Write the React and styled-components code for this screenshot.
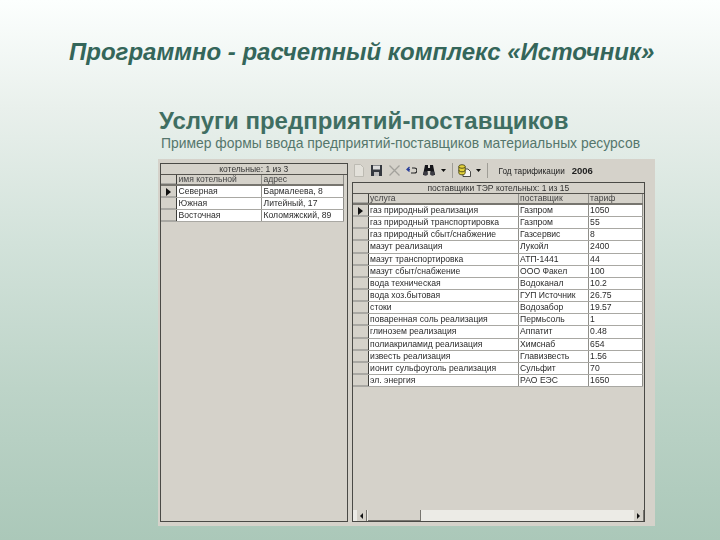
import React from 'react';
import styled, { createGlobalStyle } from 'styled-components';

const Global = createGlobalStyle`
  html, body { margin: 0; padding: 0; }
  body { width: 720px; height: 540px; overflow: hidden; font-family: "Liberation Sans", Arial, sans-serif; }
`;
const Page = styled.div`
  width: 720px; height: 540px; box-sizing: border-box; display: flex; flex-direction: column;
  background: linear-gradient(180deg, #fcfffe 0%, #e9f0ec 20%, #d2e2da 45%, #bdd4c8 72%, #abc8b9 100%);
  padding-top: 39px;
`;
const Title = styled.h1`
  margin: 0 0 0 69px; font-size: 24px; line-height: 26px; font-weight: bold; font-style: italic; color: #34665a; white-space: nowrap;
`;
const Subtitle = styled.h2`
  margin: 43px 0 0 159px; font-size: 24px; line-height: 26px; font-weight: bold; color: #3f6e62; white-space: nowrap;
`;
const Caption = styled.p`
  margin: 2px 0 0 161px; font-size: 13.9px; line-height: 15px; color: #55766c; white-space: nowrap;
`;
const Window = styled.div`
  margin: 8px 0 0 158px; width: 497px; height: 367px; box-sizing: border-box; background: #d5d2ca;
  display: flex; gap: 4px; padding: 4px 10px 4px 2px; filter: blur(0.4px);
`;
const LeftPane = styled.section`
  width: 188px; box-sizing: border-box; border: 1px solid #4a4a46;
`;
const RightPane = styled.section`
  width: 294px; display: flex; flex-direction: column; margin-top: -4px;
`;
const Toolbar = styled.div`
  height: 23px; display: flex; align-items: center; gap: 5px; box-sizing: border-box; padding-left: 1px; font-size: 8.2px; color: #222;
`;
const Sep = styled.span`
  width: 1px; height: 15px; background: #9f9d96; margin: 0 0 0 1px;
`;
const Year = styled.span`
  margin-left: 6px; white-space: nowrap;
`;
const YearValue = styled.b`
  margin-left: 7px; font-size: 9.5px;
`;
const GridFrame = styled.div`
  flex: 1; border: 1px solid #4a4a46; box-sizing: border-box; display: flex; flex-direction: column; position: relative;
`;
const GridTitle = styled.div`
  height: 10px; line-height: 10px; text-align: center; font-size: 8.5px; color: #333; border-bottom: 1px solid #55534e; white-space: nowrap;
`;
const Row = styled.div`
  display: grid; grid-template-columns: ${p => p.$cols}; height: ${p => p.$h}px; box-sizing: border-box;
  width: ${p => p.$w}px; background: ${p => p.$head ? '#d5d2ca' : '#fff'};
  border-bottom: ${p => p.$head ? '2px solid #77756f' : '1px solid #a9a8a3'};
`;
const Indicator = styled.div`
  background: #d5d2ca; border-right: 1px solid #3e3e3a; box-shadow: inset 0 -1px 0 #a9a8a3; display: flex; align-items: center; justify-content: center;
`;
const Arrow = styled.span`
  width: 0; height: 0; border-left: 5px solid #111; border-top: 4px solid transparent; border-bottom: 4px solid transparent;
`;
const Cell = styled.div`
  font-size: 8.6px; line-height: ${p => p.$head ? 9 : 11}px; color: ${p => p.$head ? '#444' : '#2b2b2b'}; padding-left: 1.5px; white-space: nowrap;
  border-right: 1px solid #8f8e89;
`;
const Scrollbar = styled.div`
  position: absolute; left: 0; right: 0; bottom: 0; height: 11px; display: flex; background: #ecebe6;
`;
const ScrollBtn = styled.div`
  width: 9px; margin-left: ${p => p.$ml || 0}px; background: #d5d2ca; border-right: 1px solid #77756f; display: flex; align-items: center; justify-content: center;
`;
const ScrollTri = styled.span`
  width: 0; height: 0; border-top: 3px solid transparent; border-bottom: 3px solid transparent;
  ${p => p.$dir === 'l' ? 'border-right: 3px solid #111;' : 'border-left: 3px solid #111;'}
`;
const Thumb = styled.div`
  width: 53px; margin-left: 1px; background: #d5d2ca; border-right: 1px solid #77756f; border-bottom: 1px solid #77756f; box-sizing: border-box;
`;
const Spacer = styled.div`flex: 1;`;

const leftRows = [['Северная', 'Бармалеева, 8'], ['Южная', 'Литейный, 17'], ['Восточная', 'Коломяжский, 89']];
const rightRows = [
  ['газ природный реализация', 'Газпром', '1050'],
  ['газ природный транспортировка', 'Газпром', '55'],
  ['газ природный сбыт/снабжение', 'Газсервис', '8'],
  ['мазут реализация', 'Лукойл', '2400'],
  ['мазут транспортировка', 'АТП-1441', '44'],
  ['мазут сбыт/снабжение', 'ООО Факел', '100'],
  ['вода техническая', 'Водоканал', '10.2'],
  ['вода хоз.бытовая', 'ГУП Источник', '26.75'],
  ['стоки', 'Водозабор', '19.57'],
  ['поваренная соль реализация', 'Пермьсоль', '1'],
  ['глинозем реализация', 'Аппатит', '0.48'],
  ['полиакриламид реализация', 'Химснаб', '654'],
  ['известь реализация', 'Главизвесть', '1.56'],
  ['ионит сульфоуголь реализация', 'Сульфит', '70'],
  ['эл. энергия', 'РАО ЕЭС', '1650'],
];

const Icons = {
  file: <svg width="12" height="13" viewBox="0 0 12 13"><path d="M1.500.500h6l3 3v9h-9z" fill="#e3e1da" stroke="#bdbbb3" /></svg>,
  save: <svg width="13" height="13" viewBox="0 0 13 13"><path d="M1 1h11v11H1z" fill="#34383f" /><path d="M3 1.500h7v4H3z" fill="#dcdcdc" /><path d="M4 8h5v4H4z" fill="#bdbdbd" /></svg>,
  del: <svg width="13" height="13" viewBox="0 0 13 13"><path d="M1.500 1.500l10 10M11.500 1.500l-10 10" stroke="#a3a29c" strokeWidth="1.300" /></svg>,
  undo: <svg width="11" height="9" viewBox="0 0 11 9"><path d="M3.500 1L1 3.500l2.500 2M1.500 3.500H4" fill="none" stroke="#2a3f9a" strokeWidth="1.300" /><path d="M6 2h2.500a2.500 2.500 0 0 1 0 5H5" fill="none" stroke="#222" strokeWidth="1.200" /></svg>,
  find: <svg width="14" height="13" viewBox="0 0 14 13"><path d="M3 1h3v3h2V1h3l2 10H8.500V7h-3v4H1z" fill="#15151a" /><circle cx="3.500" cy="9.500" r="2.200" fill="#3c3c44" /><circle cx="10.500" cy="9.500" r="2.200" fill="#3c3c44" /></svg>,
  down: <svg width="5" height="3" viewBox="0 0 5 3"><path d="M0 0h5L2.500 3z" fill="#111" /></svg>,
  db: <svg width="13" height="13" viewBox="0 0 13 13"><path d="M5 5h5l2.500 2.500v5H5z" fill="#f6f6f2" stroke="#222" strokeWidth="0.800" /><path d="M.8 2.500v6.500c0 1 1.400 1.800 3.200 1.800s3.200-.8 3.200-1.800V2.500" fill="#e4d23a" stroke="#3b3a10" strokeWidth="0.800" /><ellipse cx="4" cy="2.500" rx="3.200" ry="1.800" fill="#e4d23a" stroke="#3b3a10" strokeWidth="0.800" /><path d="M.8 6c0 1 1.400 1.800 3.200 1.800S7.200 7 7.200 6" fill="none" stroke="#3b3a10" strokeWidth="0.800" /></svg>,
};

function DataGrid({ title, cols, width, head, rows, rowH, headH }) {
  return (
    <>
      <GridTitle>{title}</GridTitle>
      <Row $cols={cols} $w={width} $h={headH} $head>
        <Indicator />
        {head.map(h => <Cell key={h} $head>{h}</Cell>)}
      </Row>
      {rows.map((r, i) => (
        <Row key={r[0]} $cols={cols} $w={width} $h={rowH}>
          <Indicator>{i === 0 && <Arrow />}</Indicator>
          {r.map((c, j) => <Cell key={j}>{c}</Cell>)}
        </Row>
      ))}
    </>
  );
}

export default function App() {
  return (
    <Page>
      <Global />
      <Title>Программно - расчетный комплекс «Источник»</Title>
      <Subtitle>Услуги предприятий-поставщиков</Subtitle>
      <Caption>Пример формы ввода предприятий-поставщиков материальных ресурсов</Caption>
      <Window>
        <LeftPane>
          <DataGrid title="котельные: 1 из 3" cols="16px 85px 82px" width={183} head={['имя котельной', 'адрес']} rows={leftRows} rowH={12.15} headH={11} />
        </LeftPane>
        <RightPane>
          <Toolbar>
            {Icons.file}{Icons.save}{Icons.del}{Icons.undo}{Icons.find}{Icons.down}
            <Sep />
            {Icons.db}{Icons.down}
            <Sep />
            <Year>Год тарификации<YearValue>2006</YearValue></Year>
          </Toolbar>
          <GridFrame>
            <DataGrid title="поставщики ТЭР котельных: 1 из 15" cols="16px 150px 70px 54px" width={290} head={['услуга', 'поставщик', 'тариф']} rows={rightRows} rowH={12.15} headH={11} />
            <Scrollbar>
              <ScrollBtn $ml={4}><ScrollTri $dir="l" /></ScrollBtn>
              <Thumb />
              <Spacer />
              <ScrollBtn><ScrollTri $dir="r" /></ScrollBtn>
            </Scrollbar>
          </GridFrame>
        </RightPane>
      </Window>
    </Page>
  );
}
